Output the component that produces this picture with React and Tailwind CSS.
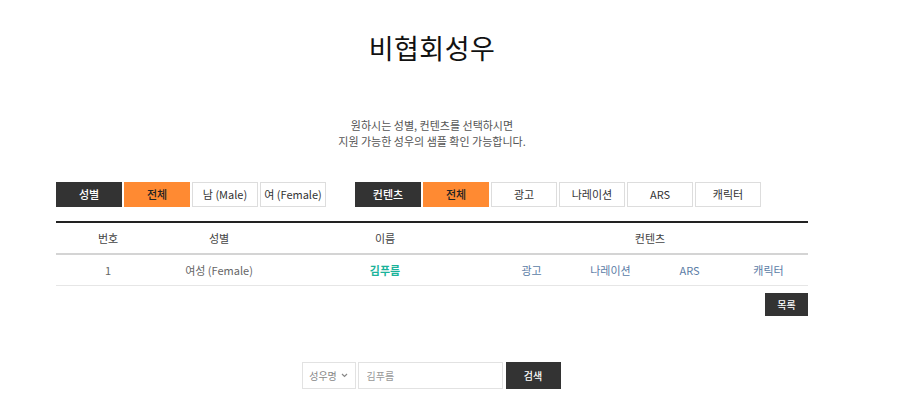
import React, { useState } from "react";

const font = { fontFamily: '"Malgun Gothic", "Noto Sans CJK KR", "Noto Sans", sans-serif' };

function FilterGroup({ label, items, active, onPick }) {
  return (
    <div className="flex gap-[2px]">
      <div className="w-[66px] h-[25px] flex items-center justify-center bg-[#333333] text-white text-[11px] font-medium">
        {label}
      </div>
      {items.map((it) => (
        <button
          key={it}
          onClick={() => onPick(it)}
          className={
            it === active
              ? "w-[66px] h-[25px] flex items-center justify-center bg-[#ff8a32] border border-[#ff8a32] text-[#222] text-[11px] font-medium"
              : "w-[66px] h-[25px] flex items-center justify-center bg-white border border-[#dddddd] text-[#333] text-[11px]"
          }
        >
          {it}
        </button>
      ))}
    </div>
  );
}

export default function App() {
  const [gender, setGender] = useState("전체");
  const [content, setContent] = useState("전체");

  return (
    <div className="bg-white min-h-[410px]" style={font}>
      <div className="ml-[56px] w-[752px] flex flex-col items-center">
        <h1 className="mt-[30px] text-[27px] leading-[36px] text-[#111] tracking-[0.5px]">비협회성우</h1>

        <p className="mt-[51px] text-[11px] leading-[16px] text-[#555] text-center">
          원하시는 성별, 컨텐츠를 선택하시면
          <br />
          지원 가능한 성우의 샘플 확인 가능합니다.
        </p>

        <div className="mt-[33px] w-full flex">
          <FilterGroup
            label="성별"
            items={["전체", "남 (Male)", "여 (Female)"]}
            active={gender}
            onPick={setGender}
          />
          <div className="ml-[29px]">
            <FilterGroup
              label="컨텐츠"
              items={["전체", "광고", "나레이션", "ARS", "캐릭터"]}
              active={content}
              onPick={setContent}
            />
          </div>
        </div>

        <table className="mt-[14px] w-full border-t-2 border-[#222] text-[11px]">
          <thead>
            <tr className="h-[32px] border-b-2 border-[#d4d4d4] text-[#444]">
              <th className="w-[104px] font-normal">번호</th>
              <th className="w-[118px] font-normal">성별</th>
              <th className="w-[214px] font-normal">이름</th>
              <th colSpan={4} className="font-normal">컨텐츠</th>
            </tr>
          </thead>
          <tbody>
            <tr className="h-[31px] border-b border-[#e6e6e6] text-center">
              <td className="text-[#666]">1</td>
              <td className="text-[#666]">여성 (Female)</td>
              <td className="text-[#1bb39a] font-bold">김푸름</td>
              <td className="w-[79px] text-[#5b7ca6]">광고</td>
              <td className="w-[79px] text-[#5b7ca6]">나레이션</td>
              <td className="w-[79px] text-[#5b7ca6]">ARS</td>
              <td className="w-[79px] text-[#5b7ca6]">캐릭터</td>
            </tr>
          </tbody>
        </table>

        <div className="w-full flex justify-end mt-[7px]">
          <button className="w-[43px] h-[23px] bg-[#333333] text-white text-[10px] font-medium">목록</button>
        </div>

        <div className="mt-[46px] flex items-center gap-[2px] mr-[2px]">
          <div className="w-[54px] h-[27px] border border-[#e2e2e2] flex items-center justify-center gap-[4px] text-[10px] text-[#888]">
            성우명
            <svg width="7" height="5" viewBox="0 0 7 5" fill="none" stroke="#888" strokeWidth="1.2">
              <path d="M1 1l2.5 2.5L6 1" />
            </svg>
          </div>
          <input
            defaultValue="김푸름"
            className="w-[145px] h-[27px] border border-[#e2e2e2] px-[8px] text-[10px] text-[#999] outline-none"
          />
          <button className="ml-[1px] w-[55px] h-[27px] bg-[#333333] text-white text-[10px] font-medium">검색</button>
        </div>
      </div>
    </div>
  );
}
